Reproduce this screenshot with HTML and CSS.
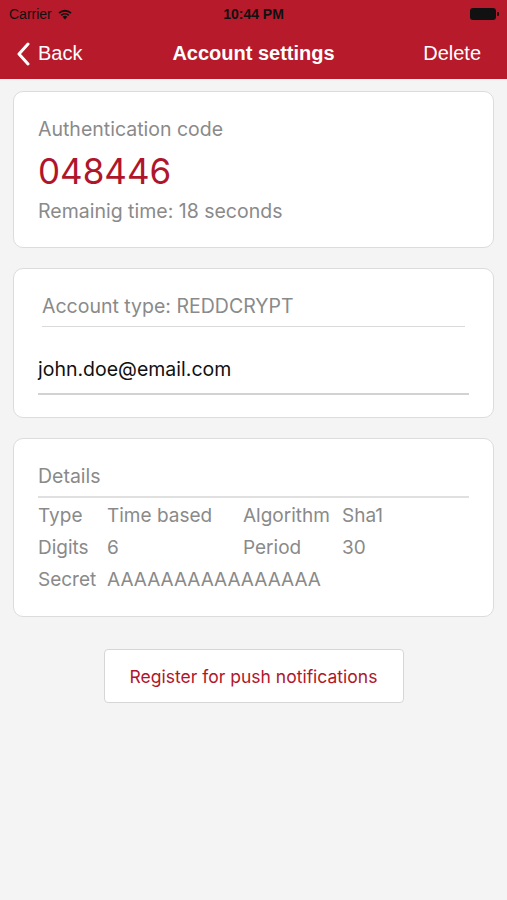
FILE: index.html
```html
<!DOCTYPE html>
<html>
<head>
<meta charset="utf-8">
<link rel="stylesheet" href="styles.css">
</head>
<body>
<header class="top">
  <div class="status">
    <div class="carrier">Carrier
      <svg class="wifi" width="16" height="12" viewBox="0 0 16 12"><path d="M8 11.5 L5.6 8.8 A3.6 3.6 0 0 1 10.4 8.8 Z" fill="#111"/><path d="M3.6 6.8 A6.4 6.4 0 0 1 12.4 6.8 L11.2 8.1 A4.7 4.7 0 0 0 4.8 8.1 Z" fill="#111"/><path d="M1.4 4.5 A9.6 9.6 0 0 1 14.6 4.5 L13.4 5.8 A7.8 7.8 0 0 0 2.6 5.8 Z" fill="#111"/></svg>
    </div>
    <div class="time">10:44 PM</div>
    <div class="battery"><span class="cell"></span><span class="nub"></span></div>
  </div>
  <nav class="nav">
    <div class="back">
      <svg width="14" height="24" viewBox="0 0 14 24"><path d="M12 2 L3 12 L12 22" fill="none" stroke="#fff" stroke-width="3" stroke-linecap="round" stroke-linejoin="round"/></svg>
      <span>Back</span>
    </div>
    <div class="title">Account settings</div>
    <div class="delete">Delete</div>
  </nav>
</header>
<main class="content">
  <section class="card code-card">
    <div class="label">Authentication code</div>
    <div class="code">048446</div>
    <div class="label remain">Remainig time: 18 seconds</div>
  </section>
  <section class="card account-card">
    <div class="field type-field">Account type: REDDCRYPT</div>
    <div class="field email-field">john.doe@email.com</div>
  </section>
  <section class="card details-card">
    <div class="details-head">Details</div>
    <div class="details-grid">
      <span>Type</span><span>Time based</span><span>Algorithm</span><span>Sha1</span>
      <span>Digits</span><span>6</span><span>Period</span><span>30</span>
      <span>Secret</span><span class="wide">AAAAAAAAAAAAAAAA</span>
    </div>
  </section>
  <div class="btn-row">
    <button class="push-btn">Register for push notifications</button>
  </div>
</main>
</body>
</html>
```
FILE: styles.css
```css
* { box-sizing: border-box; }
html, body { margin: 0; padding: 0; }
body {
  background: #f4f4f4;
  font-family: "Liberation Sans", Arial, sans-serif;
  width: 507px;
  height: 900px;
  overflow: hidden;
}
.top {
  background: #b71a2b;
  color: #fff;
  height: 79px;
}
.status {
  height: 28px;
  display: flex;
  align-items: center;
  justify-content: space-between;
  padding: 0 8px 0 9px;
  color: #111;
  font-size: 14px;
  position: relative;
}
.carrier { display: flex; align-items: center; gap: 5px; }
.time {
  position: absolute;
  left: 0; right: 0;
  text-align: center;
  font-weight: bold;
  font-size: 14px;
}
.battery { display: flex; align-items: center; gap: 1px; }
.cell { width: 26px; height: 12px; background: #111; border-radius: 3px; }
.nub { width: 2px; height: 4px; background: #111; border-radius: 0 1px 1px 0; }
.nav {
  height: 51px;
  display: flex;
  align-items: center;
  justify-content: space-between;
  padding: 0 26px 0 16px;
  font-size: 20px;
  position: relative;
}
.back { display: flex; align-items: center; gap: 8px; }
.back svg { display: block; }
.title {
  position: absolute;
  left: 0; right: 0;
  text-align: center;
  font-weight: bold;
  pointer-events: none;
}
.content {
  padding: 12px 13px;
  display: flex;
  flex-direction: column;
  gap: 20px;
  font-family: Inter, "Liberation Sans", sans-serif;
}
.card {
  background: #fff;
  border: 1px solid #dcdcdc;
  border-radius: 10px;
}
.code-card { padding: 26px 24px 24px; height: 157px; }
.label { color: #8a8a8a; font-size: 19.5px; line-height: 22px; }
.code { color: #b0162b; font-size: 35px; line-height: 40px; margin-top: 11px; }
.remain { margin-top: 9px; }
.account-card { height: 150px; padding: 22px 24px 0 24px; }
.field { font-size: 19.5px; line-height: 22px; }
.type-field {
  color: #8a8a8a;
  margin: 0 4px;
  padding: 4px 0 9px;
  border-bottom: 1px solid #dadada;
}
.email-field {
  color: #111;
  margin-top: 31px;
  padding-bottom: 13px;
  border-bottom: 2px solid #d2d2d2;
}
.details-card { height: 179px; padding: 23px 24px 0; color: #8a8a8a; }
.details-head {
  font-size: 19.5px;
  line-height: 22px;
  padding: 3px 0 9px;
  border-bottom: 2px solid #e0e0e0;
}
.details-grid {
  display: grid;
  grid-template-columns: 69px 136px 99px 1fr;
  grid-auto-rows: 32px;
  font-size: 19px;
  line-height: 32px;
  margin-top: 2px;
  white-space: nowrap;
}
.wide { grid-column: 2 / 5; }
.btn-row { display: flex; justify-content: center; margin-top: 12px; }
.push-btn {
  width: 300px;
  height: 54px;
  background: #fff;
  border: 1px solid #d6d6d6;
  border-radius: 4px;
  color: #b0162b;
  font-family: Inter, "Liberation Sans", sans-serif;
  font-size: 17.5px;
}
```
